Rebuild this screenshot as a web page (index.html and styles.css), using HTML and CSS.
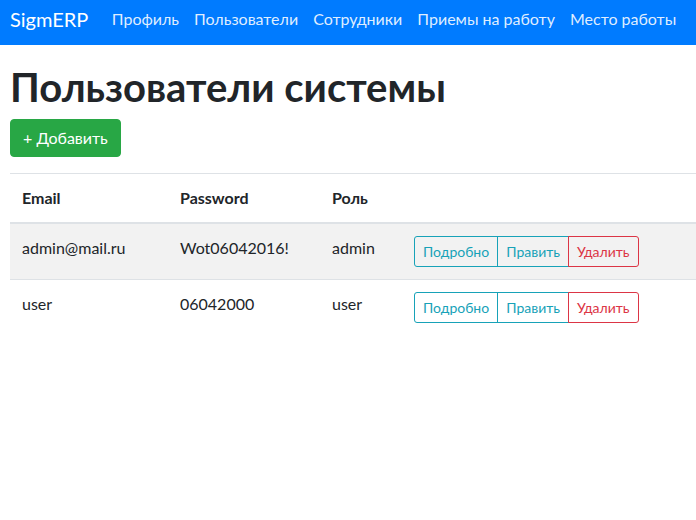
FILE: index.html
```html
<!DOCTYPE html>
<html lang="ru">
<head>
<meta charset="utf-8">
<title>SigmERP</title>
<link rel="stylesheet" href="styles.css">
</head>
<body>
<nav class="navbar">
  <a class="brand" href="#">SigmERP</a>
  <ul class="nav">
    <li><a class="nav-link" href="#">Профиль</a></li>
    <li><a class="nav-link" href="#">Пользователи</a></li>
    <li><a class="nav-link" href="#">Сотрудники</a></li>
    <li><a class="nav-link" href="#">Приемы на работу</a></li>
    <li><a class="nav-link" href="#">Место работы</a></li>
  </ul>
</nav>
<main class="content">
  <h1 class="title">Пользователи системы</h1>
  <a class="btn btn-success" href="#">+ Добавить</a>
  <table class="table">
    <thead>
      <tr>
        <th class="col-email">Email</th>
        <th class="col-pass">Password</th>
        <th class="col-role">Роль</th>
        <th></th>
      </tr>
    </thead>
    <tbody>
      <tr class="striped">
        <td>admin@mail.ru</td>
        <td>Wot06042016!</td>
        <td>admin</td>
        <td>
          <div class="btn-group">
            <a class="btn-sm btn-info" href="#">Подробно</a><a class="btn-sm btn-info" href="#">Править</a><a class="btn-sm btn-danger" href="#">Удалить</a>
          </div>
        </td>
      </tr>
      <tr>
        <td>user</td>
        <td>06042000</td>
        <td>user</td>
        <td>
          <div class="btn-group">
            <a class="btn-sm btn-info" href="#">Подробно</a><a class="btn-sm btn-info" href="#">Править</a><a class="btn-sm btn-danger" href="#">Удалить</a>
          </div>
        </td>
      </tr>
    </tbody>
  </table>
</main>
</body>
</html>
```
FILE: styles.css
```css
* { box-sizing: border-box; }
html, body { margin: 0; padding: 0; }
body {
  font-family: "Lato", "Open Sans", sans-serif;
  font-size: 16px;
  line-height: 1.5;
  color: #212529;
  background: #fff;
}
a { text-decoration: none; }

.navbar {
  display: flex;
  align-items: center;
  height: 45px;
  padding: 0 10px 7px;
  background: #007bff;
  white-space: nowrap;
}
.brand {
  color: #fff;
  font-size: 20px;
  line-height: 30px;
  margin-right: 16px;
}
.nav {
  display: flex;
  list-style: none;
  margin: 0;
  padding: 0;
}
.nav-link {
  display: block;
  color: rgba(255,255,255,.88);
  padding: 0 7.5px;
  line-height: 24px;
}

.content {
  padding: 18px 0 0 10px;
}
.title {
  margin: 0 0 8px;
  font-size: 40px;
  font-weight: 700;
  line-height: 48px;
}
.btn {
  display: inline-block;
  font-size: 16px;
  line-height: 24px;
  padding: 6px 12px;
  border: 1px solid transparent;
  border-radius: 4px;
}
.btn-success {
  background: #28a745;
  border-color: #28a745;
  color: #fff;
}

.table {
  width: 100%;
  margin-top: 16px;
  border-collapse: collapse;
}
.table th, .table td {
  padding: 12px;
  text-align: left;
  vertical-align: top;
  border-top: 1px solid #dee2e6;
  line-height: 24px;
}
.table thead th {
  border-bottom: 2px solid #dee2e6;
  font-weight: 700;
}
.col-email { width: 158px; }
.col-pass { width: 152px; }
.col-role { width: 82px; }
.striped { background: rgba(0,0,0,.05); }

.btn-group { display: inline-flex; }
.btn-sm {
  display: inline-block;
  font-size: 14px;
  line-height: 21px;
  padding: 4px 8px;
  border: 1px solid;
  background: transparent;
}
.btn-info { color: #17a2b8; border-color: #17a2b8; }
.btn-danger { color: #dc3545; border-color: #dc3545; }
.btn-group .btn-sm + .btn-sm { margin-left: -1px; }
.btn-group .btn-sm:first-child { border-radius: 3px 0 0 3px; }
.btn-group .btn-sm:last-child { border-radius: 0 3px 3px 0; position: relative; }
```
